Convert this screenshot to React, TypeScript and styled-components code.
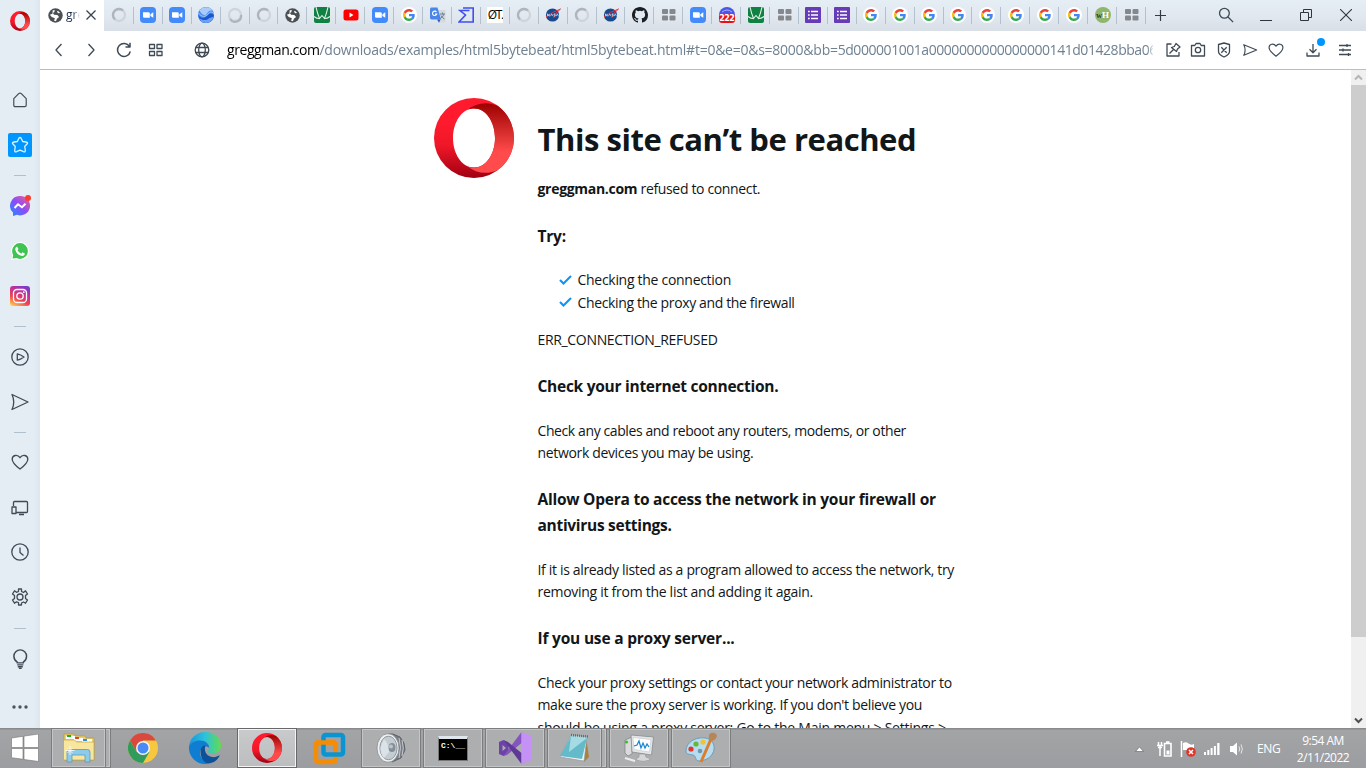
import React, { useId } from "react";
import styled, { createGlobalStyle } from "styled-components";

const Global = createGlobalStyle`
  * { box-sizing: border-box; }
  body { margin: 0; background: #fff; font-family: "Open Sans", "Noto Sans", sans-serif; overflow: hidden; }
  svg { display: block; flex: none; }
`;

const Screen = styled.div`
  width: 1366px; height: 768px; display: flex; flex-direction: column; overflow: hidden;
`;
const Browser = styled.div`display: flex; height: 728px;`;
const Sidebar = styled.nav`
  width: 40px; flex: none; display: flex; flex-direction: column; align-items: center;
  background: linear-gradient(90deg, #e4ecf4 34px, #dde6ee 40px);
`;
const SideItem = styled.div<{ $h: number }>`
  width: 40px; height: ${p => p.$h}px; flex: none; display: flex; align-items: center; justify-content: center;
`;
const SideRule = styled.div<{ $top: number; $bottom: number }>`
  width: 12px; height: 1px; flex: none; background: #b0c0cc; margin: ${p => p.$top}px 0 ${p => p.$bottom}px;
`;
const ActiveTile = styled.div`
  width: 24px; height: 24px; border-radius: 2px; background: #0096ff;
  display: flex; align-items: center; justify-content: center;
`;
const Main = styled.div`flex: 1; min-width: 0; display: flex; flex-direction: column;`;
const TabStrip = styled.div`
  height: 31px; display: flex; flex: none; background: linear-gradient(#e5edf5, #e1e8f0 50%, #d8dfe7);
`;
const ActiveTab = styled.div`
  width: 64px; background: #fff; display: flex; align-items: center; padding: 0 7px 1px 8px; flex: none;
`;
const TabTitle = styled.span`
  width: 14px; margin-left: 3px; overflow: hidden; font-size: 12px; line-height: 18px; color: #1b2a4a; white-space: nowrap;
  mask-image: linear-gradient(90deg, #000 50%, transparent);
`;
const TabClose = styled.span`margin-left: 6px;`;
const Tabs = styled.div`
  width: 1041px; margin-left: 1px; padding-bottom: 1px; display: grid; grid-template-columns: repeat(36, 1fr); align-items: center;
`;
const Tab = styled.div`
  height: 17px; border-right: 1px solid #b3c0cd; display: flex; align-items: center; justify-content: center; padding-left: 1px;
`;
const TabBadge = styled.div<{ $bg: string; $r: number }>`
  width: 16px; height: 16px; border-radius: ${p => p.$r}px; background: ${p => p.$bg};
  display: flex; align-items: center; justify-content: center; overflow: hidden; flex: none;
`;
const ZeroT = styled.span`font: 12px/16px "Open Sans", sans-serif; letter-spacing: -1.3px; color: #000; white-space: nowrap;`;
const WhText = styled.span`font: bold 8px/16px "Liberation Serif", serif; color: #333; white-space: nowrap; & b { color: #fff; font-size: 9px; }`;
const WindowControls = styled.div`flex: 1; display: flex; align-items: center; padding: 0 0 1px 8px;`;
const Slot = styled.span<{ $ml: number }>`margin-left: ${p => p.$ml}px; display: block;`;

const AddressBar = styled.div`
  height: 39px; flex: none; display: flex; align-items: center; border-bottom: 1px solid #b3bfca; background: #fff;
`;
const Url = styled.div`
  width: 926px; flex: none; margin-left: 16px; white-space: nowrap; overflow: hidden; font-size: 14px; line-height: 22px;
  color: #6f8191; letter-spacing: -0.25px; mask-image: linear-gradient(90deg, #000 920px, transparent 928px);
`;
const Host = styled.span`color: #000; letter-spacing: -0.42px;`;
const DownloadBox = styled.div`position: relative; margin-left: 20px;`;
const Dot = styled.i<{ $s: number; $t: number; $r: number; $c: string }>`
  position: absolute; width: ${p => p.$s}px; height: ${p => p.$s}px; top: ${p => p.$t}px; right: ${p => p.$r}px;
  border-radius: 50%; background: ${p => p.$c};
`;
const Relative = styled.div`position: relative;`;

const Viewport = styled.div`flex: 1; min-height: 0; display: flex; background: #fff;`;
const PageArea = styled.div`flex: 1; overflow: hidden; display: flex; justify-content: center; align-items: flex-start;`;
const Article = styled.div`width: 524px; padding-top: 28px; display: flex; gap: 24px;`;
const Copy = styled.div`width: 420px; color: #111618; padding-top: 22px;`;
const H1 = styled.h1`margin: 0 0 19.3px; font-size: 31px; line-height: 39px; font-weight: 700; white-space: nowrap;`;
const H3 = styled.h3`margin: 22.8px 0 20px; font-size: 15.5px; line-height: 25.6px; font-weight: 700;`;
const P = styled.p`margin: 0; font-size: 14px; line-height: 22.4px;`;
const Line = styled.span<{ $ls?: number }>`display: block; white-space: nowrap; letter-spacing: ${p => p.$ls ?? 0}px;`;
const Run = styled.span<{ $ls: number }>`letter-spacing: ${p => p.$ls}px;`;
const List = styled.ul`margin: 0 0 15px; padding: 0 0 0 21px; list-style: none; font-size: 14px; line-height: 22.4px;`;
const Item = styled.li`display: flex; align-items: center; gap: 6px;`;

const Scrollbar = styled.div`
  width: 15px; background: #f0f0f0; display: flex; flex-direction: column; align-items: center;
`;
const ScrollArrow = styled.div`height: 15px; display: flex; align-items: center;`;
const Thumb = styled.div`width: 15px; height: 552px; background: #cdcdcd; margin-bottom: auto;`;

const Taskbar = styled.div`
  height: 40px; display: flex; background: linear-gradient(#88898b 1px, #a3a4a6 2px, #9c9da0); color: #fff;
`;
const Start = styled.div`width: 51px; padding: 6px 0 0 11px;`;
const TaskCell = styled.div`width: 62px; display: flex; flex: none;`;
const TaskButton = styled.div<{ $kind: "pinned" | "open" | "active"; $stack?: boolean }>`
  width: ${p => (p.$stack ? 55 : 60)}px; height: 40px; display: flex; align-items: center; justify-content: center; flex: none;
  border: 1px solid ${p => (p.$kind === "pinned" ? "transparent" : p.$kind === "active" ? "#67686a" : "#7c7d7f")};
  background: ${p => (p.$kind === "pinned" ? "none" : p.$kind === "active" ? "linear-gradient(#c9cacb, #bcbdbf)" : "#adaeb0")};
  box-shadow: ${p => (p.$kind === "pinned" ? "none" : p.$kind === "active" ? "inset 0 0 0 1px #f3f3f3" : "inset 0 0 0 1px #c4c5c6")};
`;
const StackEdge = styled.div`
  width: 5px; height: 40px; border: 1px solid #7c7d7f; border-left: 0; background: #adaeb0; box-shadow: inset -1px 0 #c4c5c6, inset 0 1px #c4c5c6, inset 0 -1px #c4c5c6;
`;
const Tray = styled.div`margin-left: auto; display: flex; align-items: center; padding-top: 1px;`;
const Lang = styled.span`font-size: 12px; margin-left: 13px; width: 24px; letter-spacing: -0.4px;`;
const Clock = styled.div`
  width: 64px; margin: 0 11px 0 10px; text-align: center; font-size: 12px; line-height: 17px; letter-spacing: -0.5px; white-space: nowrap;
`;

const OperaLogo = ({ size }: { size: number }) => {
  const id = useId().replace(/:/g, "");
  return (
    <svg width={size} height={size} viewBox="0 0 80 80">
      <defs>
        <linearGradient id={id + "a"} x1="0" y1="0" x2="0" y2="1">
          <stop offset=".3" stopColor="#ff1b2d" /><stop offset=".6" stopColor="#ee1728" /><stop offset="1" stopColor="#a00012" />
        </linearGradient>
        <linearGradient id={id + "b"} x1="0" y1="0" x2="0" y2="1">
          <stop offset="0" stopColor="#9c0000" /><stop offset=".7" stopColor="#ff4b4b" />
        </linearGradient>
      </defs>
      <path fill={`url(#${id}a)`} fillRule="evenodd" d="M40 0a40 40 0 1 0 0 80a40 40 0 1 0 0-80ZM40 10.5C52 10.5 61 24 61 40S52 69.5 40 69.5S19 56 19 40S28 10.5 40 10.5Z" />
      <path fill={`url(#${id}b)`} d="M33 12C43 4 54 3.5 64 8A40 40 0 0 1 64 72C54 76.5 43 76 33 68C35 69 37.500 69.500 40 69.500C52 69.500 61 56 61 40S52 10.500 40 10.500C37.500 10.500 35 11 33 12Z" />
    </svg>
  );
};

const StrokeIcon = ({ s = 18, w = 1.3, c = "#3f4a55", children }: { s?: number; w?: number; c?: string; children: React.ReactNode }) => (
  <svg width={s} height={s} viewBox="0 0 18 18" fill="none" stroke={c} strokeWidth={w} strokeLinejoin="round">{children}</svg>
);

const heart = "M9 16C5 13 1.200 10 1.200 6.200C1.200 2 6.500 1 9 4.700C11.500 1 16.800 2 16.800 6.200C16.800 10 13 13 9 16Z";
const plane = "M1 1.500L17 9L1 16.500Q4.500 9 1 1.500Z";

const Spinner = ({ flip }: { flip?: boolean }) => (
  <svg width="16" height="16" viewBox="0 0 16 16" fill="none" strokeWidth="2.300">
    <circle cx="8" cy="8" r="6" stroke="#ced4da" />
    <path d={flip ? "M3 12A6 6 0 0 0 14 8" : "M4 12.500A6 6 0 0 1 12 3.500"} stroke="#b0b5bb" />
  </svg>
);
const Zoom = () => (
  <svg width="16" height="16" viewBox="0 0 16 16"><rect width="16" height="16" rx="4" fill="#438bfb" />
    <path fill="#fff" d="M3 5.200h5.500q1.300 0 1.300 1.300v4.300H4.300Q3 10.800 3 9.500ZM10.400 7.200L13.300 5.200v5.600L10.400 8.900Z" /></svg>
);
const Google = () => (
  <TabBadge $bg="#fff" $r={8}>
    <svg width="12" height="12" viewBox="0 0 48 48">
      <path fill="#EA4335" d="M24 9.500c3.540 0 6.710 1.220 9.210 3.600l6.850-6.850C35.900 2.380 30.470 0 24 0 14.620 0 6.510 5.380 2.560 13.220l7.980 6.190C12.430 13.720 17.740 9.500 24 9.500z" />
      <path fill="#4285F4" d="M46.980 24.550c0-1.570-.15-3.090-.38-4.550H24v9.020h12.940c-.58 2.960-2.260 5.480-4.780 7.180l7.730 6c4.510-4.180 7.090-10.360 7.090-17.650z" />
      <path fill="#FBBC05" d="M10.530 28.590c-.48-1.450-.76-2.990-.76-4.590s.27-3.140.76-4.590l-7.980-6.190C.92 16.460 0 20.120 0 24c0 3.880.92 7.540 2.560 10.780l7.970-6.190z" />
      <path fill="#34A853" d="M24 48c6.480 0 11.930-2.130 15.890-5.810l-7.730-6c-2.150 1.450-4.920 2.300-8.160 2.300-6.260 0-11.570-4.220-13.470-9.910l-7.980 6.190C6.510 42.620 14.620 48 24 48z" />
    </svg>
  </TabBadge>
);
const Earth = () => (
  <svg width="16" height="16" viewBox="0 0 16 16"><circle cx="8" cy="8" r="8" fill="#4387ef" />
    <path fill="#a9cbf9" d="M1.500 3.500A8 8 0 0 1 14.500 3.500C12 3 10.500 4 9 6.500S4 9 1.500 3.500Z" /><path fill="#1b55cf" d="M0 8C3 12 7 11.500 9.500 8.500S14 6 16 8.500A8 8 0 0 1 2 13.200Z" />
    <path fill="#6aa2f5" d="M1 11C5 14 9 13.500 11.500 11T15.800 9.500A8 8 0 0 1 3 14.200Z" />
    <path d="M.5 6C4 11 8 9.500 10 7s4-2.500 5.800-.5" fill="none" stroke="#c6dcfb" strokeWidth=".8" /></svg>
);
const DarkGlobe = () => (
  <svg width="15" height="15" viewBox="0 0 16 16"><circle cx="8" cy="8" r="7.700" fill="#4b5054" />
    <path fill="#fff" d="M5 2.300L7.500 2.500L6.500 4.500L5.200 5.200L6.500 7.200L10 7.500L11.800 9.500L9.500 11.500L8.500 14L6.500 13.500L7.300 10.800L4 9.500L2 7.200L4.800 6Z" />
    <path fill="#fff" d="M10.500 2.800L13 5.300L11 5.700L9.500 4Z" /></svg>
);
const Green = () => (
  <svg width="16" height="16" viewBox="0 0 16 16"><rect width="16" height="16" rx="2" fill="#108043" />
    <path fill="none" stroke="#e3f1e8" strokeWidth="1.100" d="M2 0Q3.500 7 5.500 11.500L8 8.500L10.500 11.500Q12.500 7 14 0M0 9.500Q3 11.800 5.500 11.500M10.500 11.500Q13 11.800 16 9.500" /></svg>
);
const YouTube = () => (
  <svg width="16" height="16" viewBox="0 0 16 16"><rect x=".5" y="2.500" width="15" height="11" rx="2.500" fill="#f00" /><path fill="#fff" d="M6.500 5.600v4.800L10.500 8Z" /></svg>
);
const Translate = () => (
  <svg width="16" height="16" viewBox="0 0 16 16"><path fill="#d5d9de" d="M6 3h9.500v12.500H9Z" /><path fill="#4a86e8" d="M1 .5h6.500L11 12.500H1.500L0 11.500V1.500Z" /><path fill="#2a5fc0" d="M7 12.500h3.500L9 15.800Z" />
    <path fill="none" stroke="#fff" strokeWidth="1.100" d="M6.500 5A2.200 2.200 0 1 0 6.800 7H5" /><path fill="none" stroke="#69808b" strokeWidth="1" d="M10 7h5M12.500 5.500V7M14 7Q13 10 10.500 11.500M11 8.500Q12 10.500 14.500 12" /></svg>
);
const Sigma = () => (
  <svg width="16" height="16" viewBox="0 0 16 16" fill="none" stroke="#3f4ff2" strokeWidth="1.600"><path d="M5 1H15.200V15H1L7.500 8L2 3.500H11.500" /></svg>
);
const Nasa = () => (
  <svg width="16" height="16" viewBox="0 0 16 16"><circle cx="7.500" cy="8" r="6.600" fill="#174a90" /><path d="M1 10Q7 5 15.500 2Q10 6 8.500 11" fill="none" stroke="#e8343c" strokeWidth="1" />
    <path d="M2.500 9.200v-2.400l1.700 2.400v-2.400M5.500 9.200L6.700 6.800L8 9.200M10.300 6.900H9v1h1.200v1.200H8.800M11.300 9.200L12.300 6.800L13.500 9.200" fill="none" stroke="#e6ebf3" strokeWidth=".7" /></svg>
);
const GitHub = () => (
  <svg width="16" height="16" viewBox="0 0 16 16"><path fill="#1b1f24" d="M8 0C3.580 0 0 3.580 0 8c0 3.540 2.290 6.530 5.470 7.590.4.070.55-.17.55-.38 0-.19-.01-.82-.01-1.490-2.010.37-2.530-.49-2.690-.94-.09-.23-.48-.94-.82-1.130-.28-.15-.68-.52-.01-.53.63-.01 1.080.58 1.230.82.72 1.210 1.870.87 2.330.66.07-.52.28-.87.51-1.070-1.780-.2-3.640-.89-3.640-3.950 0-.87.31-1.590.82-2.150-.08-.2-.36-1.020.08-2.120 0 0 .67-.21 2.200.82a7.600 7.600 0 0 1 4 0c1.530-1.040 2.200-.82 2.200-.82.44 1.100.16 1.920.08 2.120.51.56.82 1.270.82 2.150 0 3.070-1.870 3.750-3.650 3.950.29.25.54.73.54 1.480 0 1.070-.01 1.930-.01 2.200 0 .21.15.46.55.38A8 8 0 0 0 16 8c0-4.420-3.580-8-8-8Z" /></svg>
);
const GridIcon = () => (
  <svg width="14" height="12" viewBox="0 0 14 12" fill="#85898d"><rect width="6" height="5" rx="1" /><rect x="7.500" width="6" height="5" rx="1" /><rect y="6.500" width="6" height="5" rx="1" /><rect x="7.500" y="6.500" width="6" height="5" rx="1" /></svg>
);
const BadgeCount = styled.span`
  position: absolute; left: 0; bottom: 0; width: 16px; height: 9px; background: #e5141c; border-radius: 3px;
  color: #fff; font: bold 8px/9px "DejaVu Sans", sans-serif; text-align: center; letter-spacing: -0.6px;
`;
const Counter = () => (
  <Relative>
    <svg width="16" height="16" viewBox="0 0 16 16"><circle cx="8" cy="8" r="8" fill="#4b56e8" /><path d="M3 5Q8 1 13 5" stroke="#a9b0ff" fill="none" /></svg>
    <BadgeCount>222</BadgeCount>
  </Relative>
);
const Forms = () => (
  <svg width="16" height="16" viewBox="0 0 16 16"><rect width="16" height="16" rx="1" fill="#673ab7" />
    <path stroke="#fff" strokeWidth="1.700" d="M3 4.500h1.700M6 4.500h7M3 8h1.700M6 8h7M3 11.500h1.700M6 11.500h7" /></svg>
);

const tabIcons: Record<string, React.ReactNode> = {
  s: <Spinner />, r: <Spinner flip />, z: <Zoom />, e: <Earth />, d: <DarkGlobe />, v: <Green />, y: <YouTube />, g: <Google />,
  t: <Translate />, m: <Sigma />, o: <TabBadge $bg="#fff" $r={0}><ZeroT>ØT.</ZeroT></TabBadge>, n: <Nasa />, h: <GitHub />,
  q: <GridIcon />, c: <Counter />, f: <Forms />, w: <TabBadge $bg="#8fb66c" $r={8}><WhText>w<b>H</b></WhText></TabBadge>,
};
const tabOrder = "szzersdvyzgtmosnsnhqzcvqffggggggggwq";

const Explorer = () => (
  <svg width="34" height="32" viewBox="0 0 34 32">
    <path fill="#e9cf74" stroke="#b99a3e" strokeWidth=".7" d="M2 6V2h10l1 2h10l1 2h8v22H2Z" />
    <path fill="#fff" d="M4 4h9v3H4ZM12 6h9v3h-9ZM20 7h10v3H20Z" /><path fill="#17b51d" d="M5 3h4v2H5Z" /><path fill="#d7492b" d="M13 5h4v2h-4Z" /><path fill="#2695dd" d="M21 7h4v2h-4Z" />
    <path fill="#f8e69c" stroke="#c2a348" strokeWidth=".7" d="M1.500 8h11l2 2h17.500v18H1.500Z" />
    <path fill="#8ecbea" stroke="#4e9cc6" strokeWidth=".8" d="M5 30V20q0-2.500 2.500-2.500h18Q28 17.500 28 20v10h-5v-7H10v7Z" /><path stroke="#fff" strokeWidth=".9" opacity=".9" d="M8 14v9M3.500 18.500h9M5.500 16l5 5M10.500 16l-5 5" /></svg>
);
const Chrome = () => (
  <svg width="30" height="30" viewBox="0 0 30 30">
    <circle cx="15" cy="15" r="15" fill="#f7c83f" /><path fill="#d9493f" d="M2 7.500A15 15 0 0 1 28 7.500H15L8.500 18.700Z" /><path fill="#2f9c5b" d="M2 7.500A15 15 0 0 0 15 30L21.500 18.700H15L8.500 18.700Z" />
    <circle cx="15" cy="15" r="7" fill="#f5f5f5" /><circle cx="15" cy="15" r="5.500" fill="#4a8af4" /></svg>
);
const Edge = () => (
  <svg width="32" height="32" viewBox="0 0 32 32">
    <defs><linearGradient id="edgeTop"><stop offset="0" stopColor="#1a94dc" /><stop offset=".5" stopColor="#2cc2dc" /><stop offset="1" stopColor="#63dc4c" /></linearGradient></defs>
    <path fill="url(#edgeTop)" d="M0 15A16 16 0 0 1 16 0C26 0 32 7 32 13.500C32 19 28 21.500 23.500 21.500C19.500 21.500 18 20 19.500 18C22 14 18 9 12 9C6 9 1 12 0 15Z" />
    <path fill="#0f7dd2" d="M0 15C1 11 6 8.500 11 8.500C17 8.500 20.500 12.500 20 16C18 13 11 14.500 11 20.500C11 27 17 31 21 31Q18.500 32 16 32A16 16 0 0 1 0 15Z" />
    <path fill="#0d5198" d="M11.500 19C11.500 15.500 14 13.500 16.500 13.500C15 17 16 24 23 25C26 25.500 28.500 24.500 30 23.500C31 23 30.500 24 30 25C27 30 22 32 18 31C14 30 11.500 25 11.500 19Z" /></svg>
);
const VMware = () => (
  <svg width="33" height="33" viewBox="0 0 33 33" fill="none" strokeWidth="4.500"><rect x="3" y="10.500" width="19.500" height="19.500" rx="2" stroke="#f48c06" /><rect x="10.500" y="3" width="19.500" height="19.500" rx="2" stroke="#0a95d2" /><path d="M3 15V12.500q0-2 2-2H20q2.500 0 2.500 2v6" stroke="#f48c06" /></svg>
);
const Speaker = () => (
  <svg width="32" height="32" viewBox="0 0 32 32"><path fill="#777d83" stroke="#53585d" strokeWidth=".8" d="M13 2H18L25 5Q30.500 11 30 18L26 26L17 30Z" /><path d="M24 6q3 9 0 20M27 8q2.500 8 0 16" stroke="#c6cace" fill="none" />
    <ellipse cx="13" cy="16" rx="11" ry="14.300" fill="#eef0f1" stroke="#858b90" strokeWidth=".8" /><ellipse cx="13.500" cy="16" rx="8.600" ry="11.800" fill="#c3ccd3" stroke="#7d868d" strokeWidth=".8" />
    <path d="M9 7Q14 12 14 20L9 26Q5 22 5.500 15Z" fill="#dce3e8" /><ellipse cx="17" cy="15.500" rx="3.400" ry="4.600" fill="#858e95" /><circle cx="16" cy="14.500" r="2" fill="#bcc5cc" /></svg>
);
const PromptBox = styled.div`
  width: 30px; height: 25px; background: #000; border: 1px solid #777; border-top: 3px solid #dfe6ee; color: #fff;
  font: bold 8px/10px "Liberation Mono", monospace; padding: 2px 0 0 2px; white-space: nowrap;
`;
const VisualStudio = () => (
  <svg width="32" height="32" viewBox="0 0 32 32"><path fill="#6e43a7" fillRule="evenodd" d="M0 10L4.500 8L9.500 12V20L4.500 24L0 22ZM3.500 13V19L7 16Z" /><path fill="#8554bf" d="M4.500 24L22.500 0V11L8 23Z" /><path fill="#5f3898" d="M4.500 8L9 10L22.500 21V32Z" /><path fill="#c491f5" d="M22.500 0L32 3.500V28.500L22.500 32Z" /></svg>
);
const Notepad = () => (
  <svg width="32" height="32" viewBox="0 0 32 32"><path fill="#a9823f" d="M27 5L30 25L25 30Z" /><path fill="#f4f5f5" stroke="#83969b" strokeWidth=".6" d="M12 3L28 5L25 29L1 25Z" /><path fill="#65bac9" d="M12 4L28 6L23 27L1 24Z" /><path fill="#a5dce4" d="M12 4L28 6L10 20Z" /><path d="M12 3L29 4.500" stroke="#646b6d" strokeWidth="2.500" strokeDasharray="1 1" /></svg>
);
const Monitor = () => (
  <svg width="32" height="32" viewBox="0 0 32 32"><path fill="#d9dadc" stroke="#7c7f82" strokeWidth=".7" d="M2 8L9 5V22L5 24L2 21Z" /><circle cx="3.500" cy="10" r="1.600" fill="#2bc52d" /><path fill="#e4e5e6" stroke="#888b8e" strokeWidth=".8" d="M8 3L30.500 5L28.500 23L9 20Z" /><path fill="#fcfdfe" stroke="#b9bcbf" strokeWidth=".5" d="M10 5.500L28 7.500L26.500 20L11 17.500Z" /><path d="M11 14L14 13L16 9L18 16L20 11L22 16L24 12L26 15" fill="none" stroke="#1783cd" strokeWidth="1.200" /><path fill="#d4d6d8" stroke="#95989b" strokeWidth=".7" d="M16 22h6l1 3q5 1 4 3q-7 3-14 0q0-2 3-3Z" /><path d="M2 26L12 29" stroke="#eceded" strokeWidth="2" /></svg>
);
const Paint = () => (
  <svg width="32" height="32" viewBox="0 0 32 32"><path fill="#b6dcf0" stroke="#5f93b4" strokeWidth=".8" d="M15 6C6 7 1 13 1 19C1 23 5 22 8 23C12 24 9 29 15 29C24 28 30 22 29 14C28 8 22 5 15 6Z" /><circle cx="6" cy="17" r="2.600" fill="#df372e" /><circle cx="11" cy="12" r="2.600" fill="#67b739" /><circle cx="18" cy="10" r="2.600" fill="#f4c22c" /><circle cx="15" cy="19" r="2.300" fill="#7396ad" /><path d="M16 30L26 7" stroke="#da7d2c" strokeWidth="3" /><path fill="#b78656" d="M24 8Q23 2 26 1Q31 0 32 4Q31 8 27 9Z" /></svg>
);

const taskItems: { icon: React.ReactNode; kind: "pinned" | "open" | "active"; stack?: boolean }[] = [
  { icon: <Explorer />, kind: "open", stack: true },
  { icon: <Chrome />, kind: "pinned" },
  { icon: <Edge />, kind: "pinned" },
  { icon: <OperaLogo size={30} />, kind: "active" },
  { icon: <VMware />, kind: "pinned" },
  { icon: <Speaker />, kind: "open" },
  { icon: <PromptBox>C:\__</PromptBox>, kind: "open" },
  { icon: <VisualStudio />, kind: "open" },
  { icon: <Notepad />, kind: "open", stack: true },
  { icon: <Monitor />, kind: "open" },
  { icon: <Paint />, kind: "open" },
];

const Check = () => (
  <svg width="13" height="11" viewBox="0 0 13 11"><path d="M1 5L4.500 8.500L12 1" fill="none" stroke="#0a96fa" strokeWidth="2.100" /></svg>
);

const SideRail = () => (
  <Sidebar>
    <SideItem $h={41}><OperaLogo size={20} /></SideItem>
    <SideItem $h={36} />
    <SideItem $h={46}><StrokeIcon s={16}><path d="M2 7.500L7.500 1.800Q9 .7 10.500 1.800L16 7.500V15Q16 16.500 14.500 16.500H3.500Q2 16.500 2 15Z" /></StrokeIcon></SideItem>
    <SideItem $h={44}><ActiveTile><StrokeIcon c="#dff1ff"><path d="M9 1.500Q10 1.500 10.500 3L11.700 5.500L15 6Q17.500 6.500 16 8L13.700 10.500L14.300 14Q14.500 16.500 12.500 15.700L9 14.200L5.500 15.700Q3.500 16.500 3.700 14L4.300 10.500L2 8Q.5 6.500 3 6L6.300 5.500L7.500 3Q8 1.500 9 1.500Z" /></StrokeIcon></ActiveTile></SideItem>
    <SideRule $top={8} $bottom={7} />
    <SideItem $h={45}>
      <Relative>
        <svg width="20" height="20" viewBox="0 0 20 20"><defs><linearGradient id="messenger" x1="0" y1="1" x2="1" y2="0"><stop offset="0" stopColor="#208cff" /><stop offset=".5" stopColor="#8b4dfa" /><stop offset="1" stopColor="#fa5f80" /></linearGradient></defs>
          <path fill="url(#messenger)" d="M10 0a9.700 9.700 0 1 1-3 18.800L3 20V16.600A9.700 9.700 0 0 1 10 0Z" /><path d="M4.500 12L8 8.300L12 11.200L15.500 7.800" fill="none" stroke="#fff" strokeWidth="2" /></svg>
        <Dot $s={6} $t={-1} $r={-1} $c="#ff3b30" />
      </Relative>
    </SideItem>
    <SideItem $h={45}>
      <svg width="20" height="20" viewBox="0 0 20 20"><path fill="#fff" d="M10 1A9 9 0 1 1 6 18.100L1 19L2.300 14.500A9 9 0 0 1 10 1Z" /><circle cx="10" cy="10" r="7.900" fill="#3fc351" /><path fill="#3fc351" d="M2.500 17.500L3.500 13L7 17Z" /><path fill="#fff" d="M7 5.500L8.500 8L7.500 9.300Q9 12 11.300 12.700L12.500 11.300L15 12.700Q14.500 15 12.300 15Q6.500 14 5.200 8.500Q5 6.500 7 5.500Z" /></svg>
    </SideItem>
    <SideItem $h={45}>
      <svg width="20" height="20" viewBox="0 0 20 20"><defs><linearGradient id="insta" x1=".2" y1="1" x2=".7" y2="0"><stop offset="0" stopColor="#fdc44f" /><stop offset=".35" stopColor="#ee4351" /><stop offset=".7" stopColor="#c2309b" /><stop offset="1" stopColor="#7a3cc8" /></linearGradient></defs>
        <rect width="20" height="20" rx="3" fill="url(#insta)" /><rect x="3.500" y="3.500" width="13" height="13" rx="3.500" fill="none" stroke="#fff" strokeWidth="1.300" /><circle cx="10" cy="10" r="3.200" fill="none" stroke="#fff" strokeWidth="1.300" /><circle cx="13.800" cy="6.200" r=".9" fill="#fff" /></svg>
    </SideItem>
    <SideRule $top={8} $bottom={7} />
    <SideItem $h={45}><StrokeIcon><circle cx="9" cy="9" r="8.200" /><path d="M6.300 5.800Q9.500 6.500 13 9Q9.500 11.500 6.300 12.200Z" /></StrokeIcon></SideItem>
    <SideItem $h={46}><StrokeIcon><path d={plane} /></StrokeIcon></SideItem>
    <SideRule $top={7} $bottom={7} />
    <SideItem $h={44}><StrokeIcon><path d={heart} /></StrokeIcon></SideItem>
    <SideItem $h={45}><StrokeIcon><path d="M5 14.500H15.500Q16.500 14.500 16.500 13.500V4.500Q16.500 3.500 15.500 3.500H3.500Q2.500 3.500 2.500 4.500V8M1 9h4v6.500H1ZM8 16.500h5" /></StrokeIcon></SideItem>
    <SideItem $h={45}><StrokeIcon><circle cx="9" cy="9" r="8.200" /><path d="M9 4.500V9.500L12.500 12.500" /></StrokeIcon></SideItem>
    <SideItem $h={45}><StrokeIcon><circle cx="9" cy="9" r="3" /><path d="M7.500 1h3v2.500l2 1l2-1.700l2 3.200L14.500 7.500v3l2 1.500l-2 3.200l-2-1.200l-2 1V17h-3v-2.500l-2-.7l-2 1.400l-2-3.200l2-1.500v-3l-2-1.500l2-3.200l2 1.500l2-.8Z" /></StrokeIcon></SideItem>
    <SideRule $top={9} $bottom={7} />
    <SideItem $h={46}><StrokeIcon s={20}><path d="M6.500 11.800Q3.500 9.800 3.500 6.500A5.700 5.700 0 0 1 14.900 6.500Q14.900 9.800 12 11.800V12.500H6.500ZM6.500 14.300h5.500M7 16h4.500M8 17.600h2.500" /></StrokeIcon></SideItem>
    <SideItem $h={50}><svg width="16" height="4" viewBox="0 0 16 4" fill="#4a5560"><circle cx="2" cy="2" r="1.700" /><circle cx="8" cy="2" r="1.700" /><circle cx="14" cy="2" r="1.700" /></svg></SideItem>
  </Sidebar>
);

const Toolbar = () => (
  <AddressBar>
    <Slot $ml={10}><StrokeIcon><path d="M11.500 3L6 9l5.500 6" /></StrokeIcon></Slot>
    <Slot $ml={14}><StrokeIcon><path d="M6.500 3L12 9l-5.500 6" /></StrokeIcon></Slot>
    <Slot $ml={15}><StrokeIcon w={1.5}><path d="M14.500 5.500A6.500 6.500 0 1 0 15.300 10.500M15 1.700V6H10.500" /></StrokeIcon></Slot>
    <Slot $ml={14}><StrokeIcon><path d="M2.500 3.500h5v4h-5ZM10 3.500h5v4h-5ZM2.500 10.500h5v4h-5ZM10 10.500h5v4h-5Z" /></StrokeIcon></Slot>
    <Slot $ml={28}><StrokeIcon><circle cx="9" cy="9" r="6.800" /><ellipse cx="9" cy="9" rx="3.300" ry="6.800" /><path d="M2.800 6.500h12.400M2.800 11.500h12.400" /></StrokeIcon></Slot>
    <Url><Host>greggman.com</Host>/downloads/examples/html5bytebeat/html5bytebeat.html#t=0&amp;e=0&amp;s=8000&amp;bb=<Run $ls={-0.45}>5d000001001a0000000000000000141d01428bba06</Run></Url>
    <Slot $ml={11}><StrokeIcon><path d="M7.500 3H3v12h12v-4M12 2.500L16 6L13.500 8L12.500 10.500L7.500 6.500L10.300 5.500ZM9.500 8.500L5.500 12.500" /></StrokeIcon></Slot>
    <Slot $ml={7}><StrokeIcon><path d="M2.500 4.500h3.300l1.200-2h4l1.200 2h3.300v10.500h-13Z" /><circle cx="9" cy="9" r="2.700" /></StrokeIcon></Slot>
    <Slot $ml={8}><StrokeIcon><path d="M9 2L14.500 3.500V10.500Q14.500 13.500 9 16Q3.500 13.500 3.500 10.500V3.500ZM6.300 6.300l5.400 5.400M11.700 6.300L6.300 11.700" /></StrokeIcon></Slot>
    <Slot $ml={9}><StrokeIcon s={16}><path d="M2 3L16.500 9L2 15Q5 9 2 3Z" /></StrokeIcon></Slot>
    <Slot $ml={10}><StrokeIcon s={16}><path d={heart} /></StrokeIcon></Slot>
    <DownloadBox><StrokeIcon><path d="M9 3v8.500M5.500 8.300L9 11.700L12.500 8.300M3 11.500v3.500h12v-3.500" /></StrokeIcon><Dot $s={8} $t={-3} $r={-3} $c="#0096ff" /></DownloadBox>
    <Slot $ml={14}><StrokeIcon><path d="M3 4.500h12M3 9h12M3 13.500h12M11 3v3M7 7.500v3M12.500 12v3" /></StrokeIcon></Slot>
  </AddressBar>
);

export default function App() {
  return (
    <Screen>
      <Global />
      <Browser>
        <SideRail />
        <Main>
          <TabStrip>
            <ActiveTab>
              <DarkGlobe /><TabTitle>gre</TabTitle>
              <TabClose><svg width="10" height="10" viewBox="0 0 10 10"><path d="M.5 .5l9 9M9.500 .5l-9 9" stroke="#39434d" strokeWidth="1.300" /></svg></TabClose>
            </ActiveTab>
            <Tabs>{[...tabOrder].map((k, i) => <Tab key={i}>{tabIcons[k]}</Tab>)}</Tabs>
            <WindowControls>
              <svg width="13" height="13" viewBox="0 0 13 13"><path d="M6.500 1v11M1 6.500h11" stroke="#333c45" strokeWidth="1.200" /></svg>
              <Slot $ml={51}><StrokeIcon s={16} w={1.500}><circle cx="7.200" cy="7" r="5.500" /><path d="M11 11l6 6" /></StrokeIcon></Slot>
              <Slot $ml={26}><svg width="12" height="12" viewBox="0 0 12 12"><path d="M0 11.500h12" stroke="#2e373f" strokeWidth="1" /></svg></Slot>
              <Slot $ml={28}><svg width="12" height="12" viewBox="0 0 12 12" fill="none" stroke="#2e373f"><path d="M.5 3.500h8v8h-8ZM3.500 3V.5h8v8H9" /></svg></Slot>
              <Slot $ml={28}><svg width="12" height="12" viewBox="0 0 12 12"><path d="M0 0l12 12M12 0L0 12" stroke="#2e373f" strokeWidth="1.100" /></svg></Slot>
            </WindowControls>
          </TabStrip>
          <Toolbar />
          <Viewport>
            <PageArea>
              <Article>
                <OperaLogo size={80} />
                <Copy>
                  <H1><Line $ls={-0.46}>This site can’t be reached</Line></H1>
                  <P><Line><Run $ls={-0.3}><b>greggman.com</b></Run><Run $ls={-0.35}> refused to connect.</Run></Line></P>
                  <H3><Line $ls={-0.2}>Try:</Line></H3>
                  <List>
                    <Item><Check /><Line $ls={-0.29}>Checking the connection</Line></Item>
                    <Item><Check /><Line $ls={-0.36}>Checking the proxy and the firewall</Line></Item>
                  </List>
                  <P><Line $ls={-0.33}>ERR_CONNECTION_REFUSED</Line></P>
                  <H3><Line $ls={-0.27}>Check your internet connection.</Line></H3>
                  <P><Line $ls={-0.4}>Check any cables and reboot any routers, modems, or other</Line><Line $ls={-0.34}>network devices you may be using.</Line></P>
                  <H3><Line $ls={-0.24}>Allow Opera to access the network in your firewall or</Line><Line $ls={-0.29}>antivirus settings.</Line></H3>
                  <P><Line $ls={-0.33}>If it is already listed as a program allowed to access the network, try</Line><Line $ls={-0.28}>removing it from the list and adding it again.</Line></P>
                  <H3><Line $ls={-0.2}>If you use a proxy server...</Line></H3>
                  <P><Line $ls={-0.365}>Check your proxy settings or contact your network administrator to</Line><Line $ls={-0.35}>make sure the proxy server is working. If you don't believe you</Line><Line $ls={-0.25}>should be using a proxy server: Go to the Main menu &gt; Settings &gt;</Line></P>
                </Copy>
              </Article>
            </PageArea>
            <Scrollbar>
              <ScrollArrow><svg width="9" height="7" viewBox="0 0 9 7"><path d="M1 5.500L4.500 2L8 5.500" fill="none" stroke="#b5b5b5" strokeWidth="2" /></svg></ScrollArrow>
              <Thumb />
              <ScrollArrow><svg width="9" height="7" viewBox="0 0 9 7"><path d="M1 1.500L4.500 5L8 1.500" fill="none" stroke="#505050" strokeWidth="2" /></svg></ScrollArrow>
            </Scrollbar>
          </Viewport>
        </Main>
      </Browser>
      <Taskbar>
        <Start><svg width="28" height="28" viewBox="0 0 28 28" fill="#fff" stroke="#707173" strokeWidth=".6"><path d="M.5 4L12 2.300V13.500H.5ZM13 2.100L27.500 0V13.500H13ZM.5 14.500H12V25.300L.5 23.700ZM13 14.500H27.500V27.500L13 25.500Z" /></svg></Start>
        {taskItems.map((t, i) => (
          <TaskCell key={i}><TaskButton $kind={t.kind} $stack={t.stack}>{t.icon}</TaskButton>{t.stack && <StackEdge />}</TaskCell>
        ))}
        <Tray>
          <svg width="9" height="6" viewBox="0 0 9 6"><path d="M.5 5.500L4.500 .8L8.500 5.500Z" fill="#fff" stroke="#5c5c5c" strokeWidth=".6" /></svg>
          <Slot $ml={13}><svg width="16" height="16" viewBox="0 0 16 16"><path d="M7.500 2.500h6.500v12.500h-6.500ZM9 1h3.500" fill="none" stroke="#fff" strokeWidth="1.600" /><path d="M9.500 9.500h3v4h-3Z" fill="#fff" /><path d="M1.500 1v3M4.500 1v3M0 4.500h6M3 5v10M1 6.500h4" stroke="#fff" strokeWidth="1.500" /></svg></Slot>
          <Slot $ml={7}><svg width="17" height="16" viewBox="0 0 17 16"><path d="M1.500 0v16" stroke="#fff" strokeWidth="1.500" /><path fill="#fff" d="M3 2Q6 .5 8.500 2.500T14 3v6H3Z" /><circle cx="11" cy="11" r="4.800" fill="#df3526" /><path d="M9 9l4 4M13 9l-4 4" stroke="#fff" strokeWidth="1.500" /></svg></Slot>
          <Slot $ml={7}><svg width="16" height="12" viewBox="0 0 16 12"><path fill="#fff" d="M0 9h2v3H0ZM3.300 7h2v5h-2ZM6.600 5h2v7h-2ZM9.900 3h2v9h-2ZM13.200 0h2.300v12h-2.300Z" /></svg></Slot>
          <Slot $ml={10}><svg width="14" height="14" viewBox="0 0 14 14"><path fill="#fff" d="M0 4h3L7 .5v13L3 10H0Z" /><path d="M9 4.500q1.500 2.500 0 5M11 2.500q2.700 4.500 0 9" fill="none" stroke="#e8e8e8" /></svg></Slot>
          <Lang>ENG</Lang>
          <Clock>9:54 AM<br />2/11/2022</Clock>
        </Tray>
      </Taskbar>
    </Screen>
  );
}
